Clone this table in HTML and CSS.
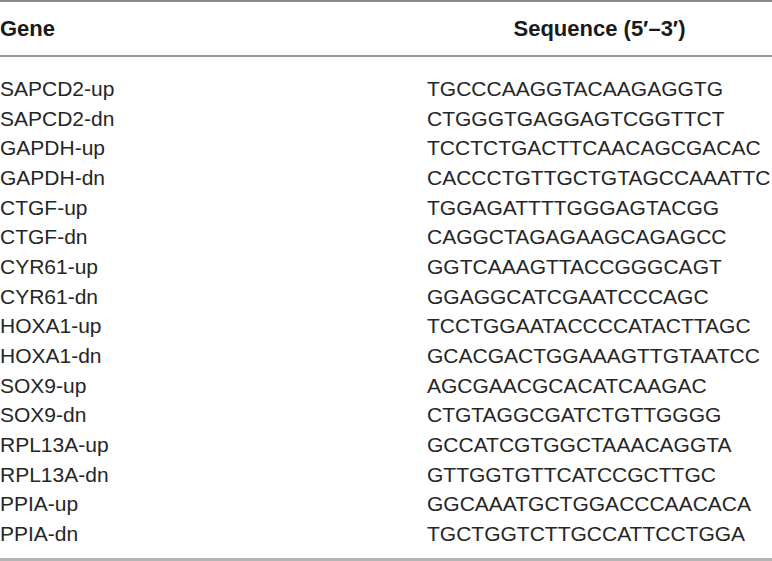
FILE: index.html
```html
<!DOCTYPE html>
<html>
<head>
<meta charset="utf-8">
<link rel="stylesheet" href="styles.css">
</head>
<body>
<div class="table">
  <div class="head">
    <div class="c1 th">Gene</div>
    <div class="c2 th center">Sequence (5′–3′)</div>
  </div>
  <div class="body">
    <div class="row"><div class="c1">SAPCD2-up</div><div class="c2">TGCCCAAGGTACAAGAGGTG</div></div>
    <div class="row"><div class="c1">SAPCD2-dn</div><div class="c2">CTGGGTGAGGAGTCGGTTCT</div></div>
    <div class="row"><div class="c1">GAPDH-up</div><div class="c2">TCCTCTGACTTCAACAGCGACAC</div></div>
    <div class="row"><div class="c1">GAPDH-dn</div><div class="c2">CACCCTGTTGCTGTAGCCAAATTC</div></div>
    <div class="row"><div class="c1">CTGF-up</div><div class="c2">TGGAGATTTTGGGAGTACGG</div></div>
    <div class="row"><div class="c1">CTGF-dn</div><div class="c2">CAGGCTAGAGAAGCAGAGCC</div></div>
    <div class="row"><div class="c1">CYR61-up</div><div class="c2">GGTCAAAGTTACCGGGCAGT</div></div>
    <div class="row"><div class="c1">CYR61-dn</div><div class="c2">GGAGGCATCGAATCCCAGC</div></div>
    <div class="row"><div class="c1">HOXA1-up</div><div class="c2">TCCTGGAATACCCCATACTTAGC</div></div>
    <div class="row"><div class="c1">HOXA1-dn</div><div class="c2">GCACGACTGGAAAGTTGTAATCC</div></div>
    <div class="row"><div class="c1">SOX9-up</div><div class="c2">AGCGAACGCACATCAAGAC</div></div>
    <div class="row"><div class="c1">SOX9-dn</div><div class="c2">CTGTAGGCGATCTGTTGGGG</div></div>
    <div class="row"><div class="c1">RPL13A-up</div><div class="c2">GCCATCGTGGCTAAACAGGTA</div></div>
    <div class="row"><div class="c1">RPL13A-dn</div><div class="c2">GTTGGTGTTCATCCGCTTGC</div></div>
    <div class="row"><div class="c1">PPIA-up</div><div class="c2">GGCAAATGCTGGACCCAACACA</div></div>
    <div class="row"><div class="c1">PPIA-dn</div><div class="c2">TGCTGGTCTTGCCATTCCTGGA</div></div>
  </div>
</div>
</body>
</html>
```

FILE: styles.css
```css
html, body {
  margin: 0;
  padding: 0;
  background: #ffffff;
}
.table {
  width: 772px;
  font-family: "Liberation Sans", Arial, sans-serif;
  font-size: 21px;
  color: #262626;
  border-top: 2px solid #8c8c8c;
}
.head {
  display: flex;
  align-items: center;
  height: 53px;
  border-bottom: 2px solid #9a9a9a;
}
.th {
  font-weight: bold;
  font-size: 22px;
  color: #1a1a1a;
}
.c1 {
  width: 427px;
  flex: none;
}
.c2 {
  flex: 1;
}
.center {
  text-align: center;
}
.body {
  padding-top: 17px;
  padding-bottom: 9px;
  border-bottom: 3px solid #b4b4b4;
}
.row {
  display: flex;
  height: 29.67px;
  line-height: 29.67px;
  white-space: nowrap;
}
```
